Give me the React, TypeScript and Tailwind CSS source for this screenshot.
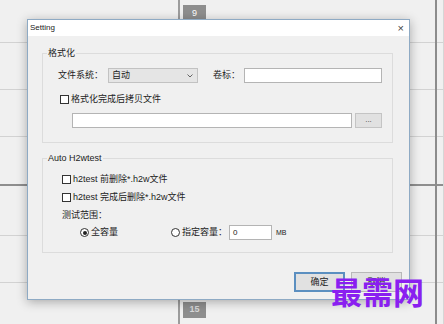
import React from 'react';

const font = { fontFamily: '"Liberation Sans", "Noto Sans CJK SC", sans-serif' };

function CheckBox({ label }: { label: string }) {
  return (
    <div className="h-[12px] flex items-center gap-[2px] text-[9px] leading-none text-[#222]">
      <span className="w-[9px] h-[9px] border border-[#333] bg-white" />
      <span>{label}</span>
    </div>
  );
}

function Radio({ label, checked }: { label: string; checked?: boolean }) {
  return (
    <div className="flex items-center gap-[2px] text-[9px] leading-none text-[#222]">
      <span className="w-[9px] h-[9px] rounded-full border border-[#333] bg-white flex items-center justify-center">
        {checked && <span className="w-[4px] h-[4px] rounded-full bg-[#222]" />}
      </span>
      <span>{label}</span>
    </div>
  );
}

function GroupBox({ title, className, children }: { title: string; className?: string; children: React.ReactNode }) {
  return (
    <div className={'relative border border-[#dcdcdc] ' + (className ?? '')}>
      <span className="absolute left-[4px] -top-[6px] px-[1px] bg-[#f0f0f0] text-[9px] leading-[11px] text-[#222]">
        {title}
      </span>
      {children}
    </div>
  );
}

function BgRows({ first, last }: { first?: React.ReactNode; last?: React.ReactNode }) {
  return (
    <div className="flex flex-col h-full">
      <div className="h-[43px] border-b border-[#d2d2d2]">{first}</div>
      <div className="h-[47px] border-b border-[#d2d2d2]" />
      <div className="h-[47px] border-b border-[#d2d2d2]" />
      <div className="h-[49px] border-b-2 border-[#8e8e8e]" />
      <div className="h-[50px] border-b border-[#d2d2d2]" />
      <div className="h-[47px] border-b border-[#d2d2d2]" />
      <div className="flex-1">{last}</div>
    </div>
  );
}

export default function App() {
  return (
    <div className="relative w-[444px] h-[324px] overflow-hidden bg-[#f0f0f0] flex" style={font}>
      {/* window behind the dialog */}
      <div className="w-[178px]">
        <BgRows />
      </div>
      <div className="w-[2px] bg-[#9c9c9c]" />
      <div className="w-[255px]">
        <BgRows
          first={
            <div className="pt-[5px] pl-[3px]">
              <div className="w-[23px] h-[20px] bg-[#8e8e8e] text-white text-[9px] flex justify-center pt-[2px]">9</div>
            </div>
          }
          last={
            <div className="pt-[19px] pl-[3px]">
              <div className="w-[23px] h-[16px] bg-[#8e8e8e] text-[#d8d8d8] text-[9px] font-bold flex items-center justify-center">15</div>
            </div>
          }
        />
      </div>
      <div className="w-[2px] bg-[#8c8c8c]" />
      <div className="flex-1 border-r border-[#d6d6d6]">
        <BgRows />
      </div>

      {/* dialog */}
      <div className="absolute left-[27px] top-[19px] w-[383px] h-[281px] border border-[#8eaac4] bg-[#f0f0f0] shadow-[0_2px_10px_rgba(0,0,0,0.3)] flex flex-col">
        <div className="h-[16px] bg-white flex items-center justify-between pl-[2px] pr-[5px]">
          <span className="text-[8px] leading-none text-[#222]">Setting</span>
          <span className="text-[11px] leading-none text-[#444]">×</span>
        </div>

        <div className="flex flex-col pl-[14px] pr-[16px] pt-[17px]">
          <GroupBox title="格式化" className="pt-[14px] pb-[14px]">
            <div className="flex items-center h-[15px] pl-[15px] text-[9px] leading-none text-[#222]">
              <span className="w-[50px]">文件系统：</span>
              <div className="w-[90px] h-[15px] bg-[#e5e5e5] border border-[#c2c2c2] flex items-center justify-between pl-[3px] pr-[4px]">
                <span>自动</span>
                <svg width="6" height="4" viewBox="0 0 6 4">
                  <path d="M0.5 0.5 L3 3 L5.5 0.5" fill="none" stroke="#555" strokeWidth="0.9" />
                </svg>
              </div>
              <span className="ml-[15px] w-[31px]">卷标：</span>
              <div className="w-[138px] h-[15px] bg-white border border-[#b4b4b4]" />
            </div>
            <div className="mt-[10px] pl-[17px]">
              <CheckBox label="格式化完成后拷贝文件" />
            </div>
            <div className="mt-[8px] pl-[29px] flex items-center gap-[3px]">
              <div className="w-[280px] h-[15px] bg-white border border-[#b4b4b4]" />
              <div className="w-[27px] h-[15px] bg-[#e1e1e1] border border-[#c4c4c4] flex items-center justify-center text-[8px] leading-none text-[#444] pb-[2px]">
                ...
              </div>
            </div>
          </GroupBox>

          <GroupBox title="Auto H2wtest" className="mt-[15px] pt-[14px] pb-[12px]">
            <div className="pl-[19px] flex flex-col gap-[6px]">
              <CheckBox label="h2test 前删除*.h2w文件" />
              <CheckBox label="h2test 完成后删除*.h2w文件" />
              <div className="h-[12px] flex items-center text-[9px] leading-none text-[#222]">测试范围：</div>
            </div>
            <div className="mt-[4px] pl-[37px] h-[15px] flex items-center text-[9px] leading-none text-[#222]">
              <div className="w-[91px]">
                <Radio label="全容量" checked />
              </div>
              <div className="w-[58px]">
                <Radio label="指定容量：" />
              </div>
              <div className="w-[43px] h-[15px] bg-white border border-[#b4b4b4] flex items-center pl-[3px] text-[8px]">0</div>
              <span className="ml-[4px] text-[7px]">MB</span>
            </div>
          </GroupBox>
        </div>

        <div className="mt-[19px] flex justify-end gap-[6px] pr-[7px]">
          <div className="w-[51px] h-[20px] bg-[#e1e1e1] border-2 border-[#5b8fc0] flex items-center justify-center text-[9px] leading-none text-[#222]">
            确定
          </div>
          <div className="w-[51px] h-[20px] bg-[#e1e1e1] border border-[#b8b8b8] flex items-center justify-center text-[9px] leading-none text-[#222]">
            取消
          </div>
        </div>
      </div>

      {/* watermark */}
      <div
        className="absolute left-[331px] top-[271px] text-[31px] leading-[40px] font-bold text-[#8a1ff0] tracking-[0px]"
        style={{ fontFamily: '"Noto Sans CJK SC", sans-serif' }}
      >
        最需网
      </div>
    </div>
  );
}
